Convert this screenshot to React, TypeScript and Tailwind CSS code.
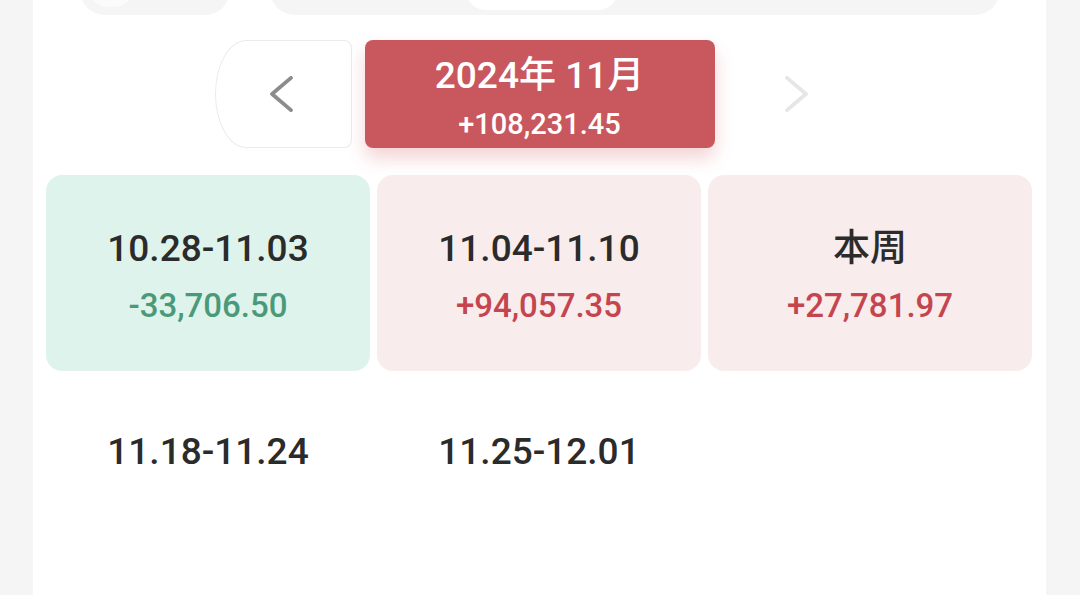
import React from "react";

type Week = { label: string; value?: string; tone?: "up" | "down" };

const weeks: Week[] = [
  { label: "10.28-11.03", value: "-33,706.50", tone: "down" },
  { label: "11.04-11.10", value: "+94,057.35", tone: "up" },
  { label: "本周", value: "+27,781.97", tone: "up" },
  { label: "11.18-11.24" },
  { label: "11.25-12.01" },
];

const font = "font-['Roboto','Noto_Sans_CJK_SC',sans-serif]";

function Chevron({ dir, className }: { dir: "left" | "right"; className: string }) {
  return (
    <svg viewBox="0 0 26 38" className={className} fill="none" stroke="currentColor" strokeWidth="4" strokeLinecap="round" strokeLinejoin="round">
      <path d={dir === "left" ? "M23 2 3 19l20 17" : "M3 2l20 17L3 36"} />
    </svg>
  );
}

function WeekCell({ week }: { week: Week }) {
  const bg = week.tone === "down" ? "bg-[#def3ec]" : week.tone === "up" ? "bg-[#f9ecec]" : "bg-transparent";
  const color = week.tone === "down" ? "text-[#4a9a79]" : "text-[#c5454f]";
  return (
    <div className={`flex h-[196px] flex-col items-center pt-[51px] rounded-[16px] ${bg}`}>
      <p className="text-[37px] font-medium leading-[46px] text-[#2b2b2b]">{week.label}</p>
      <p className={`mt-[14px] text-[33px] leading-[40px] font-medium ${color}`}>{week.value ?? "\u00a0"}</p>
    </div>
  );
}

export default function App() {
  return (
    <div className={`h-[595px] overflow-hidden bg-[#f5f5f5] px-[33px] ${font}`}>
      <div className="h-full w-[1013px] overflow-hidden bg-white">
        {/* tab bar, scrolled mostly off the top */}
        <div className="-mt-[35px] flex h-[50px] items-stretch gap-[40px] pl-[47px]">
          <div className="flex w-[150px] items-end rounded-[25px] bg-[#f5f5f5] pl-[8px]">
            <span className="mb-[8px] h-[40px] w-[46px] rounded-full bg-[#fbfbfb]" />
          </div>
          <div className="flex w-[730px] items-end rounded-[25px] bg-[#f5f5f5] pl-[196px]">
            <span className="mb-[5px] h-[40px] w-[152px] rounded-[20px] bg-white" />
          </div>
        </div>

        {/* month switcher */}
        <div className="mt-[25px] flex justify-center gap-[13px]">
          <button className="flex h-[108px] w-[137px] items-center justify-center rounded-tl-[32px_55px] rounded-bl-[32px_55px] rounded-r-[8px] border border-[#ebebeb] bg-white pr-[4px] text-[#8c8c8c]">
            <Chevron dir="left" className="h-[36px] w-[25px]" />
          </button>
          <div className="flex h-[108px] w-[350px] flex-col items-center rounded-[8px] bg-[#c8585d] pt-[14px] text-white shadow-[0_10px_18px_rgba(214,96,100,0.28)]">
            <p className="text-[37px] font-medium leading-[44px]">2024年 11月</p>
            <p className="mt-[9px] text-[29px] font-medium leading-[34px]">+108,231.45</p>
          </div>
          <button className="flex h-[108px] w-[137px] items-center justify-center text-[#e6e6e6]">
            <Chevron dir="right" className="h-[36px] w-[25px]" />
          </button>
        </div>

        {/* weeks */}
        <div className="mt-[27px] grid grid-cols-3 gap-x-[7px] gap-y-[7px] pl-[13px] pr-[14px]">
          {weeks.map((w) => (
            <WeekCell key={w.label} week={w} />
          ))}
        </div>
      </div>
    </div>
  );
}
